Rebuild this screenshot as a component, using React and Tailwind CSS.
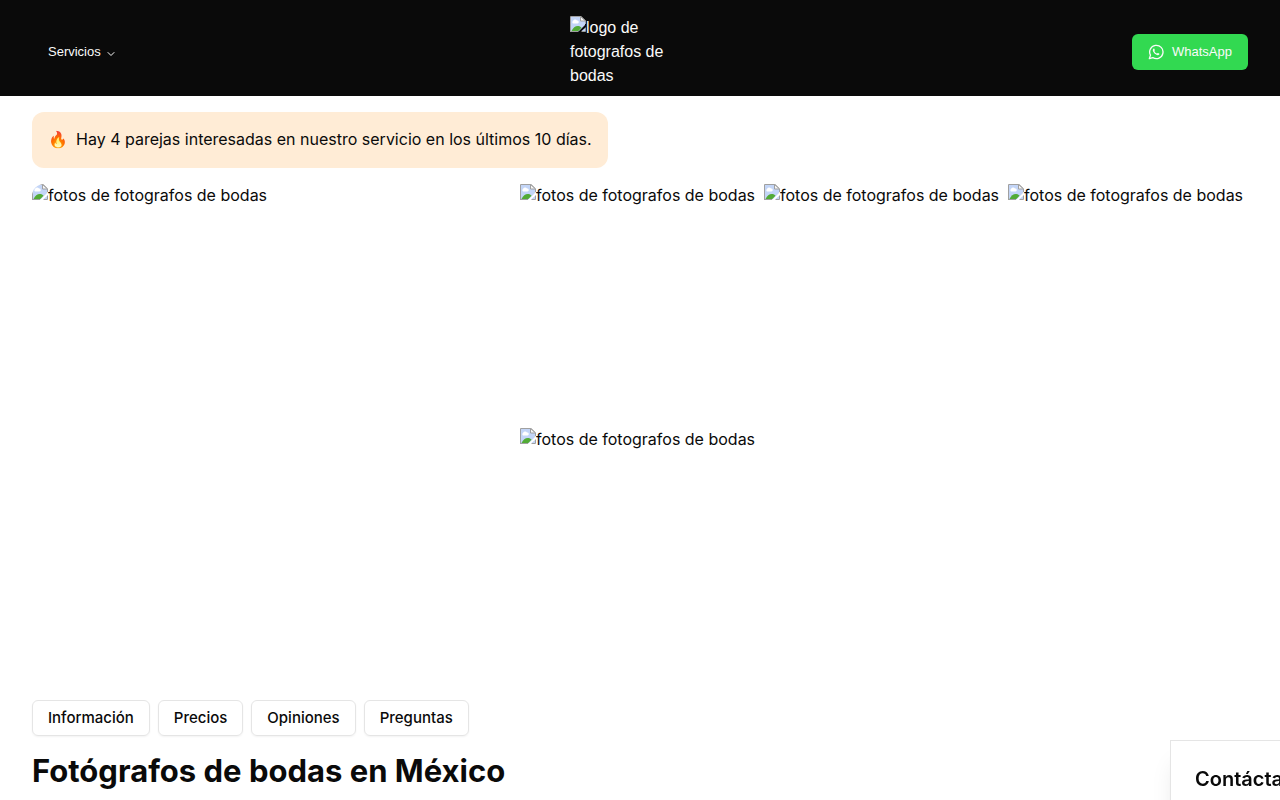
import { ChevronDown } from "lucide-react";

const PHOTO_ALT = "fotos de fotografos de bodas";

const SECTIONS = [
  { id: "informacion", label: "Información" },
  { id: "precios", label: "Precios" },
  { id: "opiniones", label: "Opiniones" },
  { id: "preguntas", label: "Preguntas" },
];

function BrokenImageIcon() {
  return (
    <svg className="inline-block size-4 align-top" viewBox="0 0 16 16" aria-hidden="true">
      <path d="M1 1h10l4 4v4l-6.500 6.500H1z" fill="#c3d5f7" />
      <path d="M3 7.500a1.500 1.500 0 0 1 0-2.500 2.200 2.200 0 0 1 4-.5 1.500 1.500 0 0 1 .5 3z" fill="#fff" />
      <path d="M1.500 15c1.500-3.500 4.500-5.500 7-5 1.500.3 2.500 1 3 1.800L8.300 15z" fill="#52ab36" />
      <path d="M.5 16V.5h10.700l4.300 4.300V8M0 15.500h8M15.500 11.500v4H11.500" fill="none" stroke="#a0a0a0" />
      <path d="M15 12v3h-3.500z" fill="#c3d5f7" />
      <path d="M10.500 .5v4.500h5z" fill="#f5f5f5" stroke="#a0a0a0" />
    </svg>
  );
}

function WhatsAppIcon() {
  return (
    <svg className="size-4" viewBox="0 0 24 24" fill="none" stroke="currentColor" strokeWidth="2" strokeLinecap="round" strokeLinejoin="round" aria-hidden="true">
      <path d="m2 22 1.700-5.300A10 10 0 1 1 7.300 20.500Z" />
      <path d="M8.200 7.200c.5-.5 1.200-.3 1.400.2l.7 1.600c.2.600-.8 1.200-.6 1.700.7 1.600 1.900 2.800 3.500 3.500.6.200 1.200-.9 1.800-.7l1.700.8c.5.300.6.900.2 1.400-1.100 1.300-2.700 1.300-4.300.6a10 10 0 0 1-4.900-4.900c-.7-1.600-.7-3 .5-4.200Z" fill="currentColor" stroke="none" />
    </svg>
  );
}

function Photo({ className = "" }) {
  return (
    <div className={`overflow-hidden leading-[22px] ${className}`}>
      <BrokenImageIcon />
      {PHOTO_ALT}
    </div>
  );
}

export default function App() {
  return (
    <div className="min-h-screen overflow-hidden bg-white font-['Inter',sans-serif] text-base text-neutral-950">
      <header className="grid h-24 grid-cols-3 items-center bg-neutral-950 px-8 font-['Liberation_Sans',sans-serif] text-neutral-50">
        <button type="button" className="mt-2 flex h-9 items-center gap-1 justify-self-start px-4 text-[13px]">
          Servicios
          <ChevronDown className="mt-1 size-3" aria-hidden="true" />
        </button>
        <a href="#inicio" className="mt-2 block w-[140px] justify-self-center pr-8 leading-6">
          <BrokenImageIcon />
          logo de fotografos de bodas
        </a>
        <a href="#whatsapp" className="mt-2 flex h-9 items-center gap-2 justify-self-end rounded-md bg-[#32d951] px-4 text-[13px]">
          <WhatsAppIcon />
          WhatsApp
        </a>
      </header>

      <main className="px-8 pt-4">
        <p className="flex w-fit gap-2 rounded-xl bg-[#ffecd6] px-4 pt-4 pb-[18px] leading-[22px]">
          <span>🔥</span>
          Hay 4 parejas interesadas en nuestro servicio en los últimos 10 días.
        </p>

        <section aria-label="Galería" className="mt-4 grid grid-cols-5 gap-1">
          <Photo className="col-span-2 row-span-2 rounded-l-xl" />
          <Photo className="aspect-square" />
          <Photo className="aspect-square" />
          <Photo className="aspect-square" />
          <Photo className="aspect-square" />
        </section>

        <nav aria-label="Secciones" className="mt-8 flex gap-2">
          {SECTIONS.map(({ id, label }) => (
            <a key={id} href={`#${id}`} className="flex h-9 items-center rounded-md border border-neutral-200 px-[15px] text-[15px] font-medium shadow-xs">
              {label}
            </a>
          ))}
        </nav>

        <h1 className="mt-4 text-[31px] leading-[38px] font-bold">Fotógrafos de bodas en México</h1>
      </main>

      <aside className="fixed -right-40 -bottom-[18px] w-[270px] border border-neutral-200 bg-white p-6 shadow-xl">
        <h2 className="text-xl leading-7 font-semibold">Contáctanos</h2>
      </aside>
    </div>
  );
}
